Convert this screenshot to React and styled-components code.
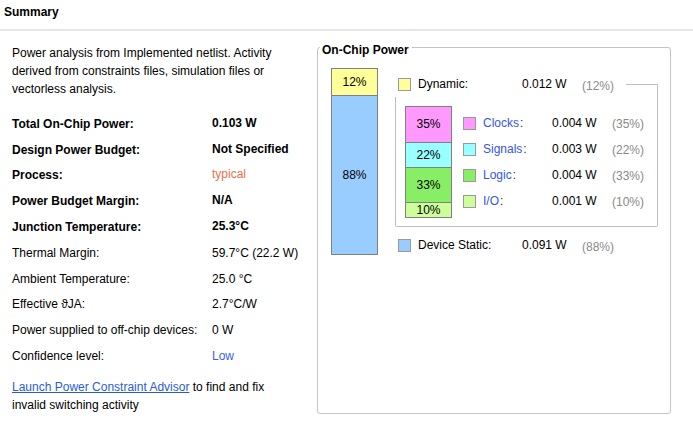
import React from 'react';
import styled, { createGlobalStyle } from 'styled-components';

const GlobalStyle = createGlobalStyle`
  html, body {
    margin: 0;
    padding: 0;
    background: #fff;
  }
  body {
    font-family: "Liberation Sans", Arial, sans-serif;
    font-size: 12px;
    color: #000;
  }
`;

const Page = styled.div`
  width: 693px;
  height: 447px;
  overflow: hidden;
  background: #fff;
`;

const Header = styled.div`
  height: 31px;
  box-sizing: border-box;
  padding: 5px 4px 0;
  line-height: 14px;
  font-weight: bold;
  border-bottom: 2px solid #e6e6e6;
`;

const Main = styled.div`
  display: flex;
  align-items: flex-start;
  gap: 20px;
  padding-left: 12px;
`;

const Info = styled.div`
  width: 285px;
  flex: none;
  padding-top: 13px;
`;

const Text = styled.p`
  margin: 0;
  line-height: 18px;
`;

const Table = styled.div`
  margin: 13px 0 9px;
`;

const Row = styled.div`
  display: flex;
  align-items: center;
  height: 25.8px;
`;

const Label = styled.div`
  width: 200px;
  flex: none;
  white-space: nowrap;
  font-weight: ${p => (p.$bold ? 'bold' : 'normal')};
`;

const Value = styled.div`
  white-space: nowrap;
  font-weight: ${p => (p.$bold ? 'bold' : 'normal')};
  color: ${p => p.$color || '#000'};
  margin-top: ${p => (p.$raised ? '-2px' : '0')};
`;

const Link = styled.a`
  color: #2a5bd7;
  text-decoration: underline;
  cursor: pointer;
`;

const Panel = styled.fieldset`
  margin: 6px 0 0;
  padding: 0;
  min-width: 0;
  width: 354px;
  height: 377px;
  box-sizing: border-box;
  border: 1px solid #c4c4c4;
  border-radius: 3px;
`;

const Legend = styled.legend`
  margin-left: 2px;
  padding: 6px 3px 0 2px;
  line-height: 14px;
  font-weight: bold;
`;

const Chart = styled.div`
  display: flex;
  align-items: flex-start;
  padding: 11px 0 0 13px;
`;

const Bar = styled.div`
  width: 47px;
  flex: none;
  box-sizing: border-box;
  border: 1px solid #808080;
  display: flex;
  flex-direction: column;
`;

const Segment = styled.div`
  height: ${p => p.$h}px;
  background: ${p => p.$bg};
  display: flex;
  align-items: center;
  justify-content: center;
  line-height: 13px;
  & + & {
    border-top: 1px solid #808080;
  }
`;

const Breakdown = styled.div`
  width: 263px;
  margin: 10px 0 0 17px;
  display: flex;
  flex-direction: column;
`;

const LegendRow = styled.div`
  display: flex;
  align-items: flex-start;
  height: 19px;
  padding-left: 3px;
  margin-top: ${p => p.$gap || 0}px;
`;

const Swatch = styled.span`
  width: 13px;
  height: 13px;
  flex: none;
  box-sizing: border-box;
  border: 1px solid #9a9a9a;
  background: ${p => p.$color};
  margin-right: 7px;
`;

const Name = styled.span`
  width: ${p => p.$w}px;
  flex: none;
  line-height: 13px;
  white-space: nowrap;
`;

const NameLink = styled.span`
  color: #3355ee;
`;

const Colon = styled.span`
  margin-left: 1px;
  color: #333;
`;

const Amount = styled.span`
  width: 60px;
  flex: none;
  line-height: 13px;
`;

const Share = styled.span`
  width: 44px;
  flex: none;
  line-height: 13px;
  color: #8a8a8a;
  margin-top: 2px;
`;

const Connector = styled.span`
  flex: 1;
  align-self: flex-end;
  height: 13px;
  box-sizing: border-box;
  border-top: 1px solid #c0c0c0;
  border-right: 1px solid #c0c0c0;
`;

const Group = styled.div`
  display: flex;
  align-items: flex-start;
  border: 1px solid #c0c0c0;
  border-top: none;
  border-radius: 0 0 2px 2px;
  padding: 9px 0 8px 9px;
`;

const SubLegend = styled.div`
  display: flex;
  flex-direction: column;
  margin: 5px 0 0 11px;
`;

const SubRow = styled.div`
  display: flex;
  align-items: center;
  height: 25.8px;
`;

const summaryRows = [
  { label: 'Total On-Chip Power:', value: '0.103 W', bold: true },
  { label: 'Design Power Budget:', value: 'Not Specified', bold: true },
  { label: 'Process:', value: 'typical', bold: true, plainValue: true, color: '#ee6e4e' },
  { label: 'Power Budget Margin:', value: 'N/A', bold: true },
  { label: 'Junction Temperature:', value: '25.3°C', bold: true },
  { label: 'Thermal Margin:', value: '59.7°C (22.2 W)' },
  { label: 'Ambient Temperature:', value: '25.0 °C' },
  { label: 'Effective ϑJA:', value: '2.7°C/W' },
  { label: 'Power supplied to off-chip devices:', value: '0 W' },
  { label: 'Confidence level:', value: 'Low', color: '#3d5ee6' },
];

const dynamicParts = [
  { name: 'Clocks', watts: '0.004 W', pct: '35%', color: '#ff99ff', h: 35 },
  { name: 'Signals', watts: '0.003 W', pct: '22%', color: '#99ffff', h: 24 },
  { name: 'Logic', watts: '0.004 W', pct: '33%', color: '#88ee66', h: 34 },
  { name: 'I/O', watts: '0.001 W', pct: '10%', color: '#ccff99', h: 14 },
];

export default function App() {
  return (
    <Page>
      <GlobalStyle />
      <Header>Summary</Header>
      <Main>
        <Info>
          <Text>
            Power analysis from Implemented netlist. Activity derived from constraints files,
            simulation files or vectorless analysis.
          </Text>
          <Table>
            {summaryRows.map(r => (
              <Row key={r.label}>
                <Label $bold={r.bold}>{r.label}</Label>
                <Value $bold={r.bold && !r.plainValue} $raised={r.bold} $color={r.color}>
                  {r.value}
                </Value>
              </Row>
            ))}
          </Table>
          <Text>
            <Link>Launch Power Constraint Advisor</Link> to find and fix invalid switching activity
          </Text>
        </Info>

        <Panel>
          <Legend>On-Chip Power</Legend>
          <Chart>
            <Bar>
              <Segment $h={26} $bg="#ffff99">12%</Segment>
              <Segment $h={158} $bg="#99ccff">88%</Segment>
            </Bar>
            <Breakdown>
              <LegendRow>
                <Swatch $color="#ffff99" />
                <Name $w={104}>Dynamic:</Name>
                <Amount>0.012 W</Amount>
                <Share>(12%)</Share>
                <Connector />
              </LegendRow>
              <Group>
                <Bar>
                  {dynamicParts.map(p => (
                    <Segment key={p.name} $h={p.h} $bg={p.color}>
                      {p.pct}
                    </Segment>
                  ))}
                </Bar>
                <SubLegend>
                  {dynamicParts.map(p => (
                    <SubRow key={p.name}>
                      <Swatch $color={p.color} />
                      <Name $w={69}>
                        <NameLink>{p.name}</NameLink>
                        <Colon>:</Colon>
                      </Name>
                      <Amount>{p.watts}</Amount>
                      <Share>({p.pct})</Share>
                    </SubRow>
                  ))}
                </SubLegend>
              </Group>
              <LegendRow $gap={12}>
                <Swatch $color="#99ccff" />
                <Name $w={104}>Device Static:</Name>
                <Amount>0.091 W</Amount>
                <Share>(88%)</Share>
              </LegendRow>
            </Breakdown>
          </Chart>
        </Panel>
      </Main>
    </Page>
  );
}
